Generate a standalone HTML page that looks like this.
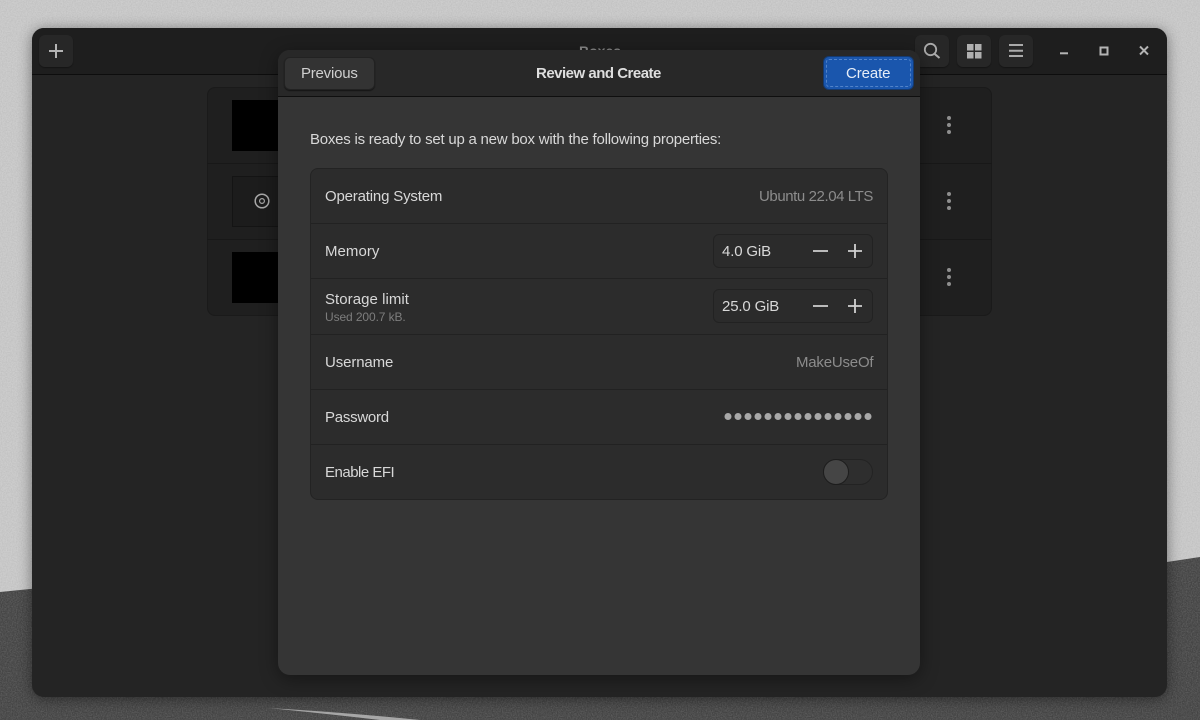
<!DOCTYPE html>
<html><head><meta charset="utf-8">
<style>
*{box-sizing:border-box;margin:0;padding:0}
html,body{width:1200px;height:720px;overflow:hidden;background:#c9c9c9;font-family:"Liberation Sans",sans-serif}
.a{position:absolute}
.t{position:absolute;white-space:nowrap;font-size:15px;line-height:18px;color:#d8d8d8;margin-top:2px}
.dim{color:#8c8c8c}
.btn{position:absolute;background:#272727;border-radius:6px;box-shadow:0 1px 1px #151515}
.row{position:absolute;left:0;width:576px;height:1px;background:#222}
.spin{position:absolute;left:713px;width:160px;height:34px;border:1px solid #222;border-radius:6px;background:#2b2b2b}
svg{position:absolute;overflow:visible}
</style></head><body>
<svg class="a" style="left:0;top:0" width="1200" height="720">
<defs><filter id="n" x="0" y="0" width="100%" height="100%"><feTurbulence type="fractalNoise" baseFrequency=".8" numOctaves="3" seed="3"/><feColorMatrix values="0 0 0 0 .35 0 0 0 0 .35 0 0 0 0 .35 1 0 0 0 -.3"/></filter></defs>
<rect width="1200" height="720" fill="#cdcdcd"/>
<path d="M0 592 L30 589 L200 575 L1000 570 L1167 562 L1200 557 V720 H0Z" fill="#444"/>
<path d="M268 708 Q340 712 420 720 H380 Q320 713 268 708Z" fill="#a8a8a8"/>
<rect width="1200" height="720" filter="url(#n)" opacity=".55"/>
</svg>
<div class="a" style="left:32px;top:28px;width:1135px;height:669px;border-radius:12px;background:#242424;box-shadow:0 2px 14px rgba(0,0,0,.45);overflow:hidden">
  <div class="a" style="left:0;top:0;width:1135px;height:47px;background:#1e1e1e;border-bottom:1px solid #0d0d0d"></div>
</div>
<div class="btn" style="left:39px;top:35px;width:34px;height:32px"></div>
<svg style="left:39px;top:35px" width="34" height="32"><path d="M10 16H24M17 9V23" stroke="#b4b4b4" stroke-width="2"/></svg>
<div class="t" style="left:579px;top:40px;color:#8a8a8a;font-weight:bold;font-size:14px">Boxes</div>
<div class="btn" style="left:915px;top:35px;width:34px;height:32px"></div>
<svg style="left:915px;top:35px" width="34" height="32"><circle cx="15.5" cy="14.5" r="5.7" fill="none" stroke="#aaa" stroke-width="1.8"/><path d="M19.5 18.8L24.5 23" stroke="#aaa" stroke-width="2"/></svg>
<div class="btn" style="left:957px;top:35px;width:34px;height:32px"></div>
<svg style="left:957px;top:35px" width="34" height="32"><path d="M10 9h6.5v6.5H10zM18 9h6.5v6.5H18zM10 17h6.5v6.5H10zM18 17h6.5v6.5H18z" fill="#b0b0b0"/></svg>
<div class="btn" style="left:999px;top:35px;width:34px;height:32px"></div>
<svg style="left:999px;top:35px" width="34" height="32"><path d="M10 10H24M10 15.7H24M10 21H24" stroke="#aaa" stroke-width="2"/></svg>
<svg style="left:1050px;top:35px" width="110" height="32"><path d="M10 18.3H18" stroke="#b4b4b4" stroke-width="2"/><rect x="50.5" y="12.5" width="7" height="7" fill="none" stroke="#b4b4b4" stroke-width="2"/><path d="M90 11.5L98 19.5M98 11.5L90 19.5" stroke="#b4b4b4" stroke-width="2"/></svg>

<div class="a" style="left:207px;top:87px;width:785px;height:229px;background:#1f1f1f;border:1px solid #1a1a1a;border-radius:8px"></div>
<div class="a" style="left:207px;top:163px;width:785px;height:1px;background:#181818"></div>
<div class="a" style="left:207px;top:239px;width:785px;height:1px;background:#181818"></div>
<div class="a" style="left:232px;top:100px;width:60px;height:51px;background:#000"></div>
<div class="a" style="left:232px;top:176px;width:60px;height:51px;background:#1c1c1c;border:1px solid #141414"></div>
<div class="a" style="left:232px;top:252px;width:60px;height:51px;background:#000"></div>
<svg style="left:254px;top:193px" width="16" height="16"><circle cx="8" cy="8" r="6.8" fill="none" stroke="#a8a8a8" stroke-width="1.5"/><circle cx="8" cy="8" r="2.4" fill="none" stroke="#a8a8a8" stroke-width="1.2"/></svg>
<svg style="left:940px;top:110px" width="18" height="180" fill="#8e8e8e"><circle cx="9" cy="8" r="2"/><circle cx="9" cy="15" r="2"/><circle cx="9" cy="22" r="2"/><circle cx="9" cy="84" r="2"/><circle cx="9" cy="91" r="2"/><circle cx="9" cy="98" r="2"/><circle cx="9" cy="160" r="2"/><circle cx="9" cy="167" r="2"/><circle cx="9" cy="174" r="2"/></svg>

<div class="a" style="left:278px;top:50px;width:642px;height:625px;border-radius:12px;background:#353535;box-shadow:0 4px 18px rgba(0,0,0,.4);overflow:hidden">
  <div class="a" style="left:0;top:0;width:642px;height:47px;background:#282828;border-bottom:1px solid #0f0f0f"></div>
</div>
<div class="btn" style="left:284px;top:57px;width:91px;height:33px;background:#333;border:1px solid #222"></div>
<div class="t" style="left:301px;top:63px;color:#cfcfcf;letter-spacing:-.22px">Previous</div>
<div class="t" style="left:536px;top:63px;font-weight:bold;letter-spacing:-.5px;color:#dedede">Review and Create</div>
<div class="a" style="left:824px;top:57px;width:89px;height:32px;background:#1a56ad;border-radius:5px;box-shadow:0 0 0 1px #143a70"></div>
<div class="a" style="left:826px;top:59px;width:85px;height:28px;border:1px dashed rgba(130,170,225,.55);border-radius:3px"></div>
<div class="t" style="left:846px;top:63px;color:#e6edf7;letter-spacing:-.1px">Create</div>

<div class="t" style="left:310px;top:129px;letter-spacing:-.23px">Boxes is ready to set up a new box with the following properties:</div>

<div class="a" style="left:310px;top:168px;width:578px;height:332px;background:#2c2c2c;border:1px solid #232323;border-radius:8px">
  <div class="row" style="top:54px"></div>
  <div class="row" style="top:109px"></div>
  <div class="row" style="top:165px"></div>
  <div class="row" style="top:220px"></div>
  <div class="row" style="top:275px"></div>
</div>
<div class="t" style="left:325px;top:186px;letter-spacing:-.18px">Operating System</div>
<div class="t dim" style="left:759px;top:186px;letter-spacing:-.42px">Ubuntu 22.04 LTS</div>
<div class="t" style="left:325px;top:241px;letter-spacing:.05px">Memory</div>
<div class="spin" style="top:234px"></div>
<div class="t" style="left:722px;top:241px;letter-spacing:-.15px">4.0 GiB</div>
<svg style="left:805px;top:234px" width="70" height="34"><path d="M8 17H23M43 17H57M50 10V24" stroke="#d0d0d0" stroke-width="1.8"/></svg>
<div class="t" style="left:325px;top:289px;letter-spacing:.05px">Storage limit</div>
<div class="t dim" style="left:325px;top:308px;font-size:12px;line-height:15px;letter-spacing:-.1px;color:#7d7d7d">Used 200.7 kB.</div>
<div class="spin" style="top:289px"></div>
<div class="t" style="left:722px;top:296px;letter-spacing:-.15px">25.0 GiB</div>
<svg style="left:805px;top:289px" width="70" height="34"><path d="M8 17H23M43 17H57M50 10V24" stroke="#d0d0d0" stroke-width="1.8"/></svg>
<div class="t" style="left:325px;top:352px;letter-spacing:-.12px">Username</div>
<div class="t dim" style="left:796px;top:352px;letter-spacing:-.2px">MakeUseOf</div>
<div class="t" style="left:325px;top:407px;letter-spacing:-.25px">Password</div>
<svg style="left:724px;top:412px" width="150" height="10" fill="#a8a8a8"><circle cx="4" cy="4.5" r="3.5"/><circle cx="14" cy="4.5" r="3.5"/><circle cx="24" cy="4.5" r="3.5"/><circle cx="34" cy="4.5" r="3.5"/><circle cx="44" cy="4.5" r="3.5"/><circle cx="54" cy="4.5" r="3.5"/><circle cx="64" cy="4.5" r="3.5"/><circle cx="74" cy="4.5" r="3.5"/><circle cx="84" cy="4.5" r="3.5"/><circle cx="94" cy="4.5" r="3.5"/><circle cx="104" cy="4.5" r="3.5"/><circle cx="114" cy="4.5" r="3.5"/><circle cx="124" cy="4.5" r="3.5"/><circle cx="134" cy="4.5" r="3.5"/><circle cx="144" cy="4.5" r="3.5"/></svg>
<div class="t" style="left:325px;top:462px;letter-spacing:-.5px">Enable EFI</div>
<div class="a" style="left:823px;top:459px;width:50px;height:26px;border-radius:13px;background:#2e2e2e;border:1px solid #232323"></div>
<div class="a" style="left:823px;top:459px;width:26px;height:26px;border-radius:50%;background:#454545;border:1px solid #1d1d1d"></div>
</body></html>
